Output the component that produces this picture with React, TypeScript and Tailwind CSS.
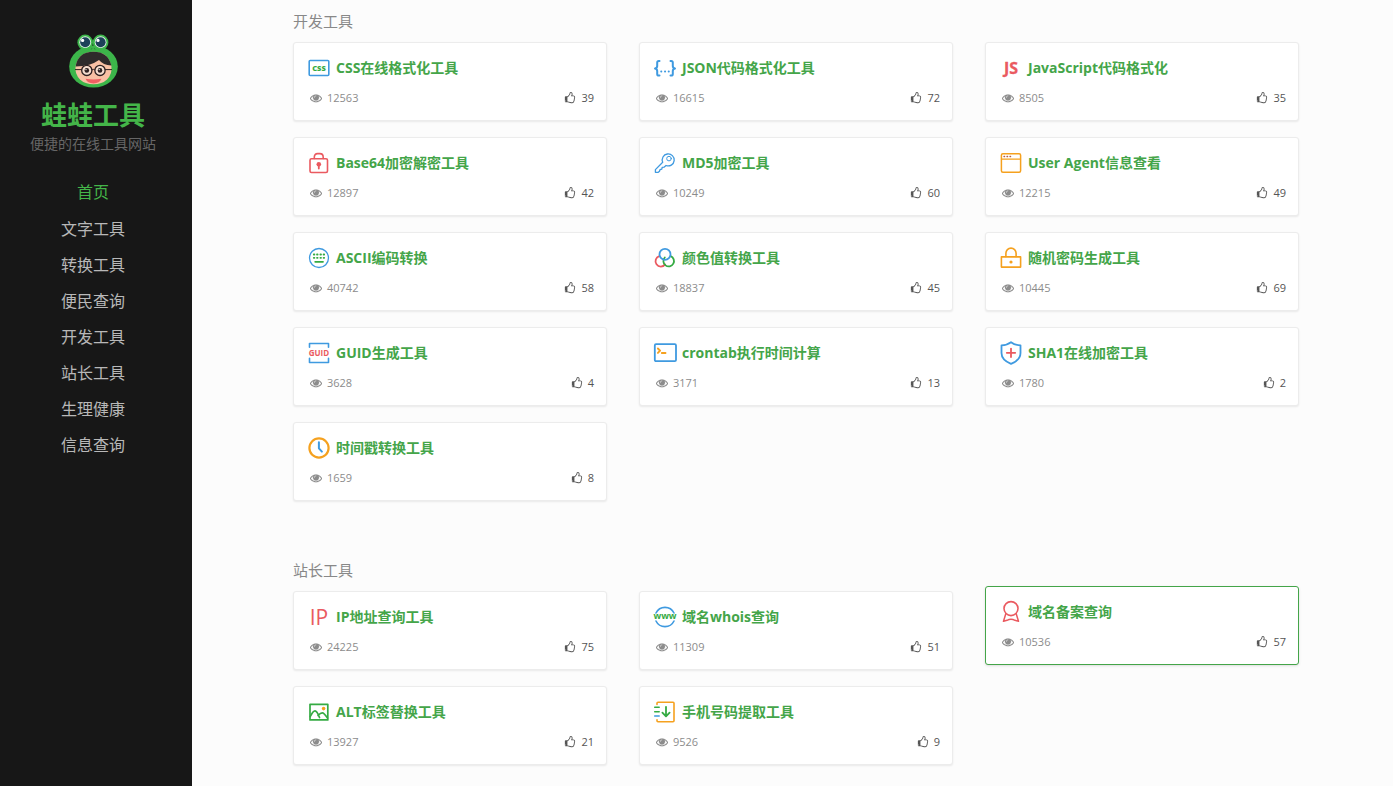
import type { ReactNode } from 'react';
import clsx from 'clsx';

const GREEN = '#35ab43';
const BLUE = '#3f9ae0';
const RED = '#ea5a60';
const ORANGE = '#f5a11f';

type Tool = {
  name: string;
  views: number;
  likes: number;
  icon: ReactNode;
  active?: boolean;
};

function Icon({ children }: { children: ReactNode }) {
  return (
    <svg viewBox="0 0 22 22" className="h-[22px] w-[22px] shrink-0 overflow-visible" fill="none" strokeLinecap="round" strokeLinejoin="round" aria-hidden="true">
      {children}
    </svg>
  );
}

const devTools: Tool[] = [
  {
    name: 'CSS在线格式化工具',
    views: 12563,
    likes: 39,
    icon: (
      <Icon>
        <rect x="1.2" y="3.5" width="19.6" height="15" rx="1" stroke={BLUE} strokeWidth="1.6" />
        <text x="11" y="13.8" textAnchor="middle" fontSize="7.5" fontWeight="800" fill={GREEN}>CSS</text>
      </Icon>
    ),
  },
  {
    name: 'JSON代码格式化工具',
    views: 16615,
    likes: 72,
    icon: (
      <Icon>
        <path d="M5.5 4H4.8Q3.2 4 3.2 5.6V9Q3.2 11 1 11.5Q3.2 12 3.2 14V17Q3.2 18.6 4.8 18.6H5.5M16.5 4h.7q1.6 0 1.6 1.6V9q0 2 2.2 2.5q-2.2.5-2.2 2.5v3q0 1.6-1.6 1.6h-.7" stroke={BLUE} strokeWidth="2" />
        <path d="M7.2 14.6h.1M11 14.6h.1M14.7 14.6h.1" stroke={BLUE} strokeWidth="2" />
      </Icon>
    ),
  },
  {
    name: 'JavaScript代码格式化',
    views: 8505,
    likes: 35,
    icon: (
      <Icon>
        <text x="11" y="17" textAnchor="middle" fontSize="16" fontWeight="700" fill={RED} stroke={RED} strokeWidth="0.3">JS</text>
      </Icon>
    ),
  },
  {
    name: 'Base64加密解密工具',
    views: 12897,
    likes: 42,
    icon: (
      <Icon>
        <rect x="2" y="6.7" width="17.5" height="13.8" rx="1.5" stroke={RED} strokeWidth="1.6" />
        <path d="M6.3 6.5V5.2q0-3.6 3.3-3.6h2.3q3.3 0 3.3 3.6v1.3" stroke={RED} strokeWidth="1.6" />
        <circle cx="10.8" cy="12.2" r="2.3" fill={RED} />
        <path d="M10.8 13v3.5" stroke={RED} strokeWidth="1.8" />
      </Icon>
    ),
  },
  {
    name: 'MD5加密工具',
    views: 10249,
    likes: 60,
    icon: (
      <Icon>
        <path d="M8.7 10.3A6 6 0 1 1 12 13.5L10 15.2 8.2 15.4 7.8 17.2 6 17.6 5.5 19.3 4.3 20.3H1.4V17.6Z" stroke={BLUE} strokeWidth="1.3" />
        <circle cx="15" cy="6.6" r="2.3" stroke={BLUE} strokeWidth="1" />
      </Icon>
    ),
  },
  {
    name: 'User Agent信息查看',
    views: 12215,
    likes: 49,
    icon: (
      <Icon>
        <rect x="1.4" y="1.7" width="19.2" height="18.6" rx="1.5" stroke={ORANGE} strokeWidth="1.5" />
        <path d="M1.5 7.2h19" stroke={ORANGE} strokeWidth="1.2" />
        <path d="M4 4.5h.6M7 4.5h.6M10 4.5h.6" stroke="#b65d42" strokeWidth="1.3" />
      </Icon>
    ),
  },
  {
    name: 'ASCII编码转换',
    views: 40742,
    likes: 58,
    icon: (
      <Icon>
        <circle cx="11" cy="11" r="9.5" stroke={BLUE} strokeWidth="1.3" />
        <path d="M5.8 7.5h.6M9 7.5h.6M12.4 7.5h.6M15.6 7.5h.6M5.8 10.8h.6M9 10.8h.6M12.4 10.8h.6M15.6 10.8h.6M7.2 14.8h7.8" stroke={GREEN} strokeWidth="1.8" />
      </Icon>
    ),
  },
  {
    name: '颜色值转换工具',
    views: 18837,
    likes: 45,
    icon: (
      <Icon>
        <path d="M5.3 9.2A5.3 5.3 0 1 0 11.1 17.4" stroke={RED} strokeWidth="1.8" />
        <path d="M10.8 10.5A5.3 5.3 0 1 0 16.7 9.2" stroke={GREEN} strokeWidth="1.8" />
        <circle cx="11" cy="7.3" r="5.5" stroke={BLUE} strokeWidth="1.8" />
      </Icon>
    ),
  },
  {
    name: '随机密码生成工具',
    views: 10445,
    likes: 69,
    icon: (
      <Icon>
        <rect x="1.4" y="9.9" width="19.2" height="10.2" stroke={ORANGE} strokeWidth="1.6" />
        <path d="M5.9 9.5V6.2a5.1 5.1 0 0 1 10.2 0V9.5" stroke={ORANGE} strokeWidth="1.6" />
        <circle cx="11" cy="15" r="1.6" fill={ORANGE} />
      </Icon>
    ),
  },
  {
    name: 'GUID生成工具',
    views: 3628,
    likes: 4,
    icon: (
      <Icon>
        <path d="M1.5 5.2V1.5h19v3.7M1.5 16.2v4.3h19v-4.3" stroke={BLUE} strokeWidth="1.6" />
        <text x="11" y="13.8" textAnchor="middle" fontSize="8" fontWeight="700" fill={RED}>GUID</text>
      </Icon>
    ),
  },
  {
    name: 'crontab执行时间计算',
    views: 3171,
    likes: 13,
    icon: (
      <Icon>
        <rect x="0.8" y="2.2" width="21.2" height="17" rx="1.2" stroke={BLUE} strokeWidth="1.8" />
        <path d="M3.9 6.5l2.2 2.2-2.2 2.2M7.8 11h3.7" stroke={ORANGE} strokeWidth="1.9" />
      </Icon>
    ),
  },
  {
    name: 'SHA1在线加密工具',
    views: 1780,
    likes: 2,
    icon: (
      <Icon>
        <path d="M11 0.2Q14.5 3 20.5 3.3V11q0 7-9.5 10.8Q1.5 18 1.5 11V3.3Q7.5 3 11 .2Z" stroke={BLUE} strokeWidth="1.8" />
        <path d="M6.8 10.8h8.4M11 6.6V15" stroke={RED} strokeWidth="1.8" />
      </Icon>
    ),
  },
  {
    name: '时间戳转换工具',
    views: 1659,
    likes: 8,
    icon: (
      <Icon>
        <circle cx="11" cy="11" r="9.6" stroke={ORANGE} strokeWidth="2.2" />
        <path d="M10.9 5.3v6l3 3.3" stroke={BLUE} strokeWidth="2" />
      </Icon>
    ),
  },
];

const siteTools: Tool[] = [
  {
    name: 'IP地址查询工具',
    views: 24225,
    likes: 75,
    icon: (
      <Icon>
        <text x="11" y="18.5" textAnchor="middle" fontSize="21" fontWeight="400" fill={RED}>IP</text>
      </Icon>
    ),
  },
  {
    name: '域名whois查询',
    views: 11309,
    likes: 51,
    icon: (
      <Icon>
        <path d="M2 7a10 10 0 0 1 18 0M2 15a10 10 0 0 0 18 0" stroke={BLUE} strokeWidth="1.6" />
        <text x="11" y="13.4" textAnchor="middle" fontSize="9" fontWeight="700" fill={GREEN}>www</text>
      </Icon>
    ),
  },
  {
    name: '域名备案查询',
    views: 10536,
    likes: 57,
    active: true,
    icon: (
      <Icon>
        <circle cx="11" cy="7.6" r="7" stroke={RED} strokeWidth="1.6" />
        <path d="M5.8 12.8L3.5 20.3L7 19.3Q11 17 15 19.3L18.5 20.3L16.2 12.8" stroke={RED} strokeWidth="1.5" />
      </Icon>
    ),
  },
  {
    name: 'ALT标签替换工具',
    views: 13927,
    likes: 21,
    icon: (
      <Icon>
        <rect x="2" y="3.3" width="17.8" height="15.6" stroke={GREEN} strokeWidth="1.7" />
        <path d="M2.3 15.5Q5 9.8 7 9.8T11.5 16.5M10 14.5Q12.5 11.8 14.3 11.8T19.5 17" stroke={GREEN} strokeWidth="1.7" />
        <circle cx="15.6" cy="7.6" r="1.8" fill={ORANGE} />
      </Icon>
    ),
  },
  {
    name: '手机号码提取工具',
    views: 9526,
    likes: 9,
    icon: (
      <Icon>
        <path d="M3 3.5V2.2Q3 1.2 4 1.2H19Q20 1.2 20 2.2V19.8Q20 20.8 19 20.8H4Q3 20.8 3 19.8V18.7" stroke={ORANGE} strokeWidth="1.6" />
        <path d="M0.7 6.3H5.2M0.7 10.7H5.2" stroke={GREEN} strokeWidth="1.5" />
        <path d="M0.7 15H5.2" stroke={BLUE} strokeWidth="1.5" />
        <path d="M12 5.8v9.4M8.4 11.6l3.6 3.8 3.6-3.8" stroke={GREEN} strokeWidth="1.8" />
      </Icon>
    ),
  },
];

const navItems = ['首页', '文字工具', '转换工具', '便民查询', '开发工具', '站长工具', '生理健康', '信息查询'];

function EyeIcon() {
  return (
    <svg viewBox="0 0 1792 1792" className="h-3 w-3" fill="currentColor" stroke="currentColor" strokeWidth="30" aria-hidden="true">
      <path d="M1664 960q-152-236-381-353 61 104 61 225 0 185-131.5 316.5t-316.5 131.5-316.5-131.5-131.5-316.5q0-121 61-225-229 117-381 353 133 205 333.5 326.5t434.5 121.5 434.5-121.5 333.5-326.5zm-720-384q0-20-14-34t-34-14q-125 0-214.5 89.5t-89.5 214.5q0 20 14 34t34 14 34-14 14-34q0-86 61-147t147-61q20 0 34-14t14-34zm848 384q0 34-20 69-140 230-376.5 368.5t-499.5 138.5-499.5-139-376.5-368q-20-35-20-69t20-69q140-229 376.5-368t499.5-139 499.5 139 376.5 368q20 35 20 69z" />
    </svg>
  );
}

function ThumbIcon() {
  return (
    <svg viewBox="0 0 1792 1792" className="h-3 w-3" fill="currentColor" aria-hidden="true">
      <path d="M256 1344q0-26-19-45t-45-19-45 19-19 45 19 45 45 19 45-19 19-45zm1280-576q0-51-39-89.5t-89-38.5h-352q0-58 48-159.5t48-160.5q0-98-32-145t-128-47q-26 26-38 85t-30.5 125.5-59.5 109.5q-22 23-77 91-4 5-23 30t-31.5 41-34.5 42.5-40 44-38.5 35.5-40 27-35.5 9h-32v640h32q13 0 31.5 3t33 6.5 38 11 35 11.5 35.5 12.5 29 10.5q211 73 342 73h121q192 0 192-167 0-26-5-56 30-16 47.5-52.5t17.5-73.5-18-69q53-50 53-119 0-25-10-55.5t-25-47.5q32-1 53.5-47t21.5-81zm128-1q0 89-49 163 9 33 9 69 0 77-38 144 3 21 3 43 0 101-60 178 1 139-85 219.5t-227 80.5h-129q-96 0-189.5-22.5t-216.5-65.5q-116-40-138-40h-288q-53 0-90.5-37.5t-37.5-90.5v-640q0-53 37.5-90.5t90.5-37.5h274q36-24 137-155 58-75 107-128 24-25 35.5-85.5t30.5-126.5 62-108q39-37 90-37 84 0 151 32.5t102 101.5 35 186q0 93-48 192h176q104 0 180 76t76 179z" />
    </svg>
  );
}

function FrogLogo() {
  return (
    <svg viewBox="0 0 49 54" className="h-[54px] w-[49px]" fill="none" aria-hidden="true">
      <ellipse cx="24.5" cy="32.6" rx="24.3" ry="21" fill="#3cb54a" />
      <circle cx="16.2" cy="8.4" r="7.8" fill="#3cb54a" />
      <circle cx="31.6" cy="8.4" r="7.8" fill="#3cb54a" />
      <circle cx="16.2" cy="8.2" r="5.9" fill="#dff1e6" />
      <circle cx="31.6" cy="8.2" r="5.9" fill="#dff1e6" />
      <circle cx="16.2" cy="8.2" r="5" fill="#1d4159" />
      <circle cx="31.6" cy="8.2" r="5" fill="#1d4159" />
      <circle cx="13.6" cy="6.4" r="1.6" fill="#fff" />
      <circle cx="29" cy="6.4" r="1.6" fill="#fff" />
      <path d="M22.3 15.4l.6-1M26 15.4l-.6-1" stroke="#226c2c" strokeWidth="0.9" />
      <path d="M6.6 32Q10 17.8 24.5 17.8T42.4 32Q43.5 40 38 45.4Q33 50.2 24.5 50.2T11 45.4Q5.5 40 6.6 32Z" fill="#f9c0a4" />
      <path d="M6.6 32.5Q9 17.8 24.5 17.8Q39 17.8 42.4 31.5Q34 31 30 26Q22 32 6.6 32.5Z" fill="#2e2a2b" />
      <path d="M6 35.6h7M36 35.6h7M22.7 36q1.6-1.3 3.4 0" stroke="#2e2020" strokeWidth="1" />
      <circle cx="17.8" cy="36.4" r="5.1" fill="#f6ddcf" stroke="#2e2020" strokeWidth="1.3" />
      <circle cx="31" cy="36.4" r="5.1" fill="#f6ddcf" stroke="#2e2020" strokeWidth="1.3" />
      <circle cx="17.8" cy="36.4" r="2.3" fill="#2e2020" />
      <circle cx="31" cy="36.4" r="2.3" fill="#2e2020" />
      <circle cx="17" cy="35.6" r="0.7" fill="#fff" />
      <circle cx="30.2" cy="35.6" r="0.7" fill="#fff" />
      <path d="M16.5 44.8Q24.5 46.3 32.5 44.8Q30.5 49.4 24.5 49.4T16.5 44.8Z" fill="#ee5f62" />
    </svg>
  );
}

function Sidebar() {
  return (
    <aside className="flex w-48 shrink-0 flex-col items-center bg-[#171717] pt-[34px] pr-[6px]">
      <FrogLogo />
      <h1 className="mt-[11px] text-[26px] leading-8 font-bold text-[#44b549]">蛙蛙工具</h1>
      <p className="mt-[3px] text-sm leading-5 text-[#666]">便捷的在线工具网站</p>
      <nav className="mt-5 flex flex-col items-center">
        {navItems.map((item, i) => (
          <a
            key={item}
            href="#"
            className={clsx('text-base leading-9 hover:text-[#44b549]', i === 0 ? 'mb-px text-[#44b549]' : 'text-[#b8b8b8]')}
          >
            {item}
          </a>
        ))}
      </nav>
    </aside>
  );
}

function ToolCard({ tool }: { tool: Tool }) {
  return (
    <article
      className={clsx(
        'rounded-[3px] border bg-white pt-[14px] pb-[13px] transition-transform hover:-translate-y-[5px] hover:border-[#44a549]',
        tool.active ? '-translate-y-[5px] border-[#44a549] shadow-sm' : 'border-[#ececec] shadow-[0_1px_2px_rgba(0,0,0,0.08)]',
      )}
    >
      <a href="#" className="flex items-center gap-[6px] px-[14px] text-sm leading-[22px] font-bold text-[#44a549]">
        {tool.icon}
        {tool.name}
      </a>
      <div className="mt-[10px] flex items-center justify-between pr-3 pl-4 text-[11px] leading-[18px]">
        <span className="flex items-center gap-[5px] text-[#8c8c8c]">
          <EyeIcon />
          {tool.views}
        </span>
        <button type="button" aria-label={`点赞 ${tool.likes}`} className="flex cursor-pointer items-center gap-[5px] text-[#555]">
          <ThumbIcon />
          {tool.likes}
        </button>
      </div>
    </article>
  );
}

function ToolSection({ title, tools }: { title: string; tools: Tool[] }) {
  return (
    <section>
      <h2 className="text-[15px] leading-6 text-[#888]">{title}</h2>
      <div className="mt-[9px] grid grid-cols-3 gap-x-8 gap-y-4">
        {tools.map((tool) => (
          <ToolCard key={tool.name} tool={tool} />
        ))}
      </div>
    </section>
  );
}

export default function App() {
  return (
    <div className="flex min-h-screen bg-[#fcfcfc] font-['Open_Sans','Noto_Sans_CJK_SC',sans-serif]">
      <Sidebar />
      <main className="flex flex-1 flex-col gap-[57px] pt-[9px] pr-[94px] pb-5 pl-[101px]">
        <ToolSection title="开发工具" tools={devTools} />
        <ToolSection title="站长工具" tools={siteTools} />
      </main>
    </div>
  );
}
